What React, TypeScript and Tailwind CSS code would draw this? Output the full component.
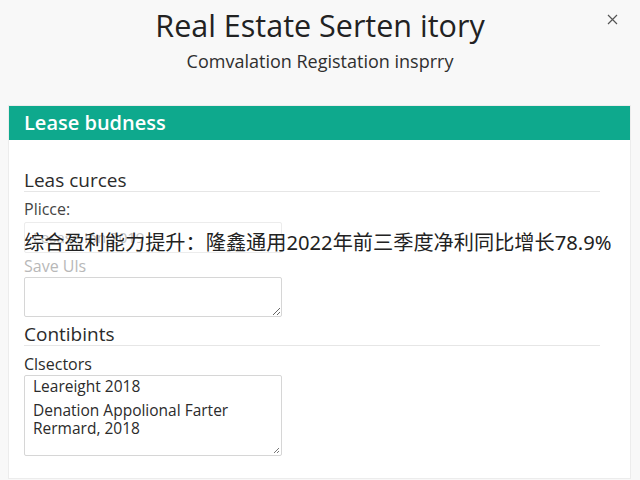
import React from 'react';

const sans = { fontFamily: '"Open Sans", "Noto Sans", sans-serif' };

function SectionTitle({ children }: { children: React.ReactNode }) {
  return (
    <div className="mr-[30px] border-b border-[#e6e6e6] text-[19px] leading-[21px] text-[#2b2b2b]">
      {children}
    </div>
  );
}

export default function App() {
  return (
    <div className="relative h-[480px] w-[640px] overflow-hidden bg-[#f8f8f8] text-[#2b2b2b]" style={sans}>
      <button className="absolute left-[607px] top-[14px]">
        <svg width="11" height="11" viewBox="0 0 11 11">
          <path d="M1 1 L10 10 M10 1 L1 10" stroke="#555" strokeWidth="1.2" />
        </svg>
      </button>

      <header className="flex flex-col items-center pt-[7px]">
        <h1 className="text-[30.5px] font-medium leading-[36px] text-[#222]">Real Estate Serten itory</h1>
        <p className="mt-[7px] text-[18px] leading-[22px] text-[#2f2f2f]">Comvalation Registation insprry</p>
      </header>

      <section className="ml-[8px] mr-[9px] mt-[33px] border border-[#ececec] bg-white">
        <div className="flex h-[34px] items-center bg-[#0ea98d] px-[15px] text-[20px] font-semibold text-white">
          Lease budness
        </div>

        <div className="pb-[22px] pl-[15px] pt-[30px]">
          <SectionTitle>Leas curces</SectionTitle>

          <label className="mt-[7px] block text-[16px] leading-[20px] text-[#444]">Plicce:</label>
          <div className="mt-[3px] flex h-[31px] w-[258px] items-center rounded-[2px] border border-[#ececec] px-[8px] text-[15px] text-[#c4c4c4]">
            Lesase ion 2019
          </div>

          <label className="mt-[3px] block text-[16px] leading-[20px] text-[#b8b8b8]">Save Uls</label>
          <textarea className="mt-[1px] block h-[40px] w-[258px] resize-y rounded-[2px] border border-[#d6d6d6] bg-white" />

          <div className="mt-[7px]">
            <SectionTitle>Contibints</SectionTitle>
          </div>

          <label className="mt-[8px] block text-[16px] leading-[20px] text-[#2b2b2b]">Clsectors</label>
          <div className="relative mt-[1px] h-[81px] w-[258px] rounded-[2px] border border-[#d6d6d6] px-[8px] pt-[1px] text-[15.5px] leading-[18px] text-[#2b2b2b]">
            <div>Leareight 2018</div>
            <div className="mt-[6px]">Denation Appolional Farter</div>
            <div>Rermard, 2018</div>
            <svg className="absolute bottom-[1px] right-[1px]" width="8" height="8" viewBox="0 0 8 8">
              <path d="M7 2 L2 7 M7 5 L5 7" stroke="#777" strokeWidth="1" />
            </svg>
          </div>
        </div>
      </section>

      <div
        className="absolute left-[24px] top-[229px] whitespace-nowrap text-[20.2px] leading-[26px] text-[#222]"
        style={{ fontFamily: '"Noto Sans", "Noto Sans CJK SC", sans-serif' }}
      >
        综合盈利能力提升：隆鑫通用2022年前三季度净利同比增长78.9%
      </div>
    </div>
  );
}
